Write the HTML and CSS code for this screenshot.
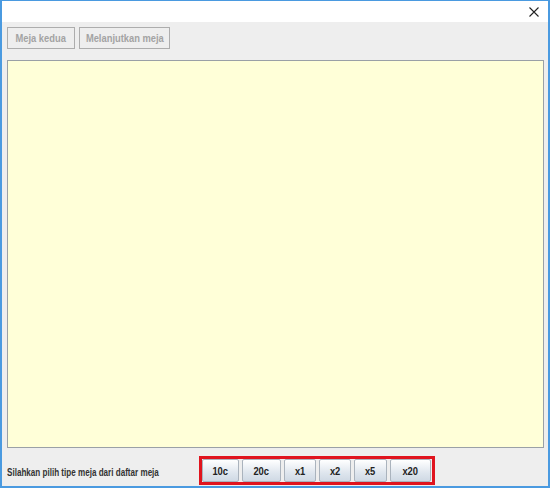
FILE: index.html
```html
<!DOCTYPE html>
<html>
<head>
<meta charset="utf-8">
<link rel="stylesheet" href="styles.css">
</head>
<body>
<div class="window">
  <div class="titlebar">
    <span class="close">
      <svg width="10" height="10" viewBox="0 0 10 10"><path d="M0.5 0.5L9.5 9.5M9.5 0.5L0.5 9.5" stroke="#222" stroke-width="1.1" fill="none"/></svg>
    </span>
  </div>
  <div class="content">
    <div class="toolbar">
      <button class="tbtn tb1"><span class="narrow">Meja kedua</span></button>
      <button class="tbtn tb2"><span class="narrow">Melanjutkan meja</span></button>
    </div>
    <div class="panel"></div>
    <div class="footer">
      <span class="label"><span class="labeltext">Silahkan pilih tipe meja dari daftar meja</span></span>
      <div class="choices">
        <button class="cbtn w10"><span class="narrow">10c</span></button>
        <button class="cbtn w20"><span class="narrow">20c</span></button>
        <button class="cbtn wx1"><span class="narrow">x1</span></button>
        <button class="cbtn wx2"><span class="narrow">x2</span></button>
        <button class="cbtn wx5"><span class="narrow">x5</span></button>
        <button class="cbtn wx20"><span class="narrow">x20</span></button>
      </div>
    </div>
  </div>
</div>
</body>
</html>
```

FILE: styles.css
```css
html, body {
  margin: 0;
  padding: 0;
  width: 550px;
  height: 488px;
  overflow: hidden;
  background: #ffffff;
  font-family: "Liberation Sans", Arial, sans-serif;
}
.window {
  box-sizing: border-box;
  width: 550px;
  height: 488px;
  border: 1px solid #4a9ae0;
  border-left-width: 2px;
  border-right-width: 2px;
  border-bottom-width: 2px;
  display: flex;
  flex-direction: column;
  background: #eeeeee;
}
.titlebar {
  height: 21px;
  background: #ffffff;
  display: flex;
  justify-content: flex-end;
  align-items: center;
  padding-right: 9px;
  flex-shrink: 0;
}
.close {
  display: flex;
  width: 10px;
  height: 10px;
}
.content {
  flex: 1;
  display: flex;
  flex-direction: column;
  padding: 5px 4px 0 5px;
  min-height: 0;
}
.toolbar {
  display: flex;
  gap: 4px;
  height: 22px;
}
.narrow {
  display: inline-block;
  transform: scaleX(0.85);
  white-space: nowrap;
}
.tbtn {
  box-sizing: border-box;
  height: 22px;
  padding: 0;
  border: 1px solid #adadad;
  background: #eeeeee;
  color: #a3a3a3;
  font-family: "Liberation Sans", Arial, sans-serif;
  font-size: 11px;
  font-weight: bold;
  display: flex;
  align-items: center;
  justify-content: center;
}
.tb1 { width: 68px; }
.tb2 { width: 91px; }
.panel {
  margin-top: 11px;
  height: 388px;
  box-sizing: border-box;
  border: 1px solid #9aa0a6;
  background: #ffffd8;
}
.footer {
  display: flex;
  align-items: center;
  margin-top: 8px;
  height: 29px;
}
.label {
  width: 192px;
  flex-shrink: 0;
  white-space: nowrap;
}
.labeltext {
  display: inline-block;
  font-size: 10.5px;
  font-weight: bold;
  color: #333333;
  transform: scaleX(0.77);
  transform-origin: left center;
}
.choices {
  display: flex;
  gap: 3px;
  border: 3px solid #e0141e;
  padding: 0 1px 0 0;
  height: 23px;
  box-sizing: content-box;
  align-items: stretch;
}
.cbtn {
  box-sizing: border-box;
  height: 23px;
  padding: 0;
  border: 1px solid #aab3bd;
  border-radius: 2px;
  background: linear-gradient(#ffffff, #dfe6ee 60%, #cfd9e4);
  color: #222222;
  font-family: "Liberation Sans", Arial, sans-serif;
  font-size: 11px;
  font-weight: bold;
  display: flex;
  align-items: center;
  justify-content: center;
}
.w10 { width: 37px; }
.w20 { width: 39px; }
.wx1 { width: 32px; }
.wx2 { width: 32px; }
.wx5 { width: 33px; }
.wx20 { width: 41px; }
```
